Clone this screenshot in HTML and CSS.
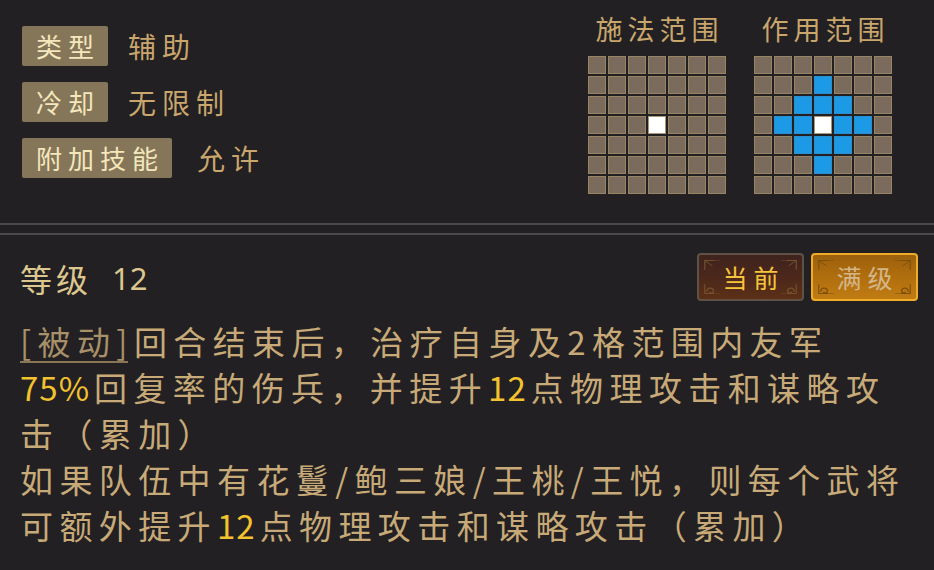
FILE: index.html
```html
<!DOCTYPE html>
<html lang="zh-CN">
<head>
<meta charset="utf-8">
<title>技能详情</title>
<link rel="stylesheet" href="styles.css">
</head>
<body>
<div class="panel">
  <section class="top">
    <div class="props">
      <div class="prop"><span class="tag">类型</span><span class="val">辅助</span></div>
      <div class="prop"><span class="tag">冷却</span><span class="val">无限制</span></div>
      <div class="prop"><span class="tag">附加技能</span><span class="val val-wide">允许</span></div>
    </div>
    <div class="ranges">
      <div class="range">
        <div class="range-title">施法范围</div>
        <div class="grid">
          <i class="c"></i><i class="c"></i><i class="c"></i><i class="c"></i><i class="c"></i><i class="c"></i><i class="c"></i>
          <i class="c"></i><i class="c"></i><i class="c"></i><i class="c"></i><i class="c"></i><i class="c"></i><i class="c"></i>
          <i class="c"></i><i class="c"></i><i class="c"></i><i class="c"></i><i class="c"></i><i class="c"></i><i class="c"></i>
          <i class="c"></i><i class="c"></i><i class="c"></i><i class="c w"></i><i class="c"></i><i class="c"></i><i class="c"></i>
          <i class="c"></i><i class="c"></i><i class="c"></i><i class="c"></i><i class="c"></i><i class="c"></i><i class="c"></i>
          <i class="c"></i><i class="c"></i><i class="c"></i><i class="c"></i><i class="c"></i><i class="c"></i><i class="c"></i>
          <i class="c"></i><i class="c"></i><i class="c"></i><i class="c"></i><i class="c"></i><i class="c"></i><i class="c"></i>
        </div>
      </div>
      <div class="range">
        <div class="range-title">作用范围</div>
        <div class="grid">
          <i class="c"></i><i class="c"></i><i class="c"></i><i class="c"></i><i class="c"></i><i class="c"></i><i class="c"></i>
          <i class="c"></i><i class="c"></i><i class="c"></i><i class="c b"></i><i class="c"></i><i class="c"></i><i class="c"></i>
          <i class="c"></i><i class="c"></i><i class="c b"></i><i class="c b"></i><i class="c b"></i><i class="c"></i><i class="c"></i>
          <i class="c"></i><i class="c b"></i><i class="c b"></i><i class="c w"></i><i class="c b"></i><i class="c b"></i><i class="c"></i>
          <i class="c"></i><i class="c"></i><i class="c b"></i><i class="c b"></i><i class="c b"></i><i class="c"></i><i class="c"></i>
          <i class="c"></i><i class="c"></i><i class="c"></i><i class="c b"></i><i class="c"></i><i class="c"></i><i class="c"></i>
          <i class="c"></i><i class="c"></i><i class="c"></i><i class="c"></i><i class="c"></i><i class="c"></i><i class="c"></i>
        </div>
      </div>
    </div>
  </section>

  <div class="divider"></div>

  <section class="detail">
    <div class="level-row">
      <div class="level"><span class="level-label">等级</span><span class="level-num">12</span></div>
      <div class="buttons">
        <button class="btn btn-cur">
          <svg class="orn" viewBox="0 0 107 48" preserveAspectRatio="none">
            <path d="M6 16 V6 H16 M91 6 H101 V16 M6 32 V42 H16 M91 42 H101 V32" fill="none" stroke="currentColor" stroke-width="1.2"/>
            <path d="M6 6 L14 12 M101 6 L93 12" stroke="currentColor" stroke-width="1"/>
            <path d="M8 40 c0 -5 7 -5 7 -1 c0 3 -4 3 -4 1" fill="none" stroke="currentColor" stroke-width="1.4"/>
            <path d="M99 40 c0 -5 -7 -5 -7 -1 c0 3 4 3 4 1" fill="none" stroke="currentColor" stroke-width="1.4"/>
            <path d="M16 6 H22 M85 6 H91 M16 42 H22 M85 42 H91" stroke="currentColor" stroke-width="0.8" opacity=".6"/>
          </svg>
          <span class="btn-text">当前</span>
        </button>
        <button class="btn btn-max">
          <svg class="orn" viewBox="0 0 107 48" preserveAspectRatio="none">
            <path d="M6 16 V6 H16 M91 6 H101 V16 M6 32 V42 H16 M91 42 H101 V32" fill="none" stroke="currentColor" stroke-width="1.2"/>
            <path d="M6 6 L14 12 M101 6 L93 12" stroke="currentColor" stroke-width="1"/>
            <path d="M8 40 c0 -5 7 -5 7 -1 c0 3 -4 3 -4 1" fill="none" stroke="currentColor" stroke-width="1.4"/>
            <path d="M99 40 c0 -5 -7 -5 -7 -1 c0 3 4 3 4 1" fill="none" stroke="currentColor" stroke-width="1.4"/>
            <path d="M16 6 H22 M85 6 H91 M16 42 H22 M85 42 H91" stroke="currentColor" stroke-width="0.8" opacity=".6"/>
          </svg>
          <span class="btn-text">满级</span>
        </button>
      </div>
    </div>

    <div class="desc">
      <p class="line"><span class="kw">[被动<span class="kw-end">]</span></span>回合结束后，治疗自身及2格范围内友军</p>
      <p class="line"><span class="hl">75<span class="hl-end">%</span></span>回复率的伤兵，并提升<span class="hl">1<span class="hl-end">2</span></span>点物理攻击和谋略攻</p>
      <p class="line">击（累加）</p>
      <p class="line">如果队伍中有花鬘/鲍三娘/王桃/王悦，则每个武将</p>
      <p class="line">可额外提升<span class="hl">1<span class="hl-end">2</span></span>点物理攻击和谋略攻击（累加）</p>
    </div>
  </section>
</div>
</body>
</html>
```

FILE: styles.css
```css
* { box-sizing: border-box; }

html, body {
  margin: 0;
  padding: 0;
  background: #222022;
}

body {
  width: 934px;
  height: 570px;
  overflow: hidden;
  font-family: "Noto Sans CJK SC", "Noto Sans", sans-serif;
}

.panel {
  display: flex;
  flex-direction: column;
}

/* ---------- top section ---------- */
.top {
  display: flex;
  justify-content: space-between;
  height: 223px;
  padding-left: 22px;
  padding-right: 42px;
}

.props {
  display: flex;
  flex-direction: column;
  gap: 16px;
  padding-top: 26px;
}

.prop {
  display: flex;
  align-items: center;
}

.tag {
  display: inline-flex;
  align-items: center;
  height: 40px;
  padding: 0 8px 0 14px;
  background: #857659;
  border-radius: 2px;
  color: #f4e7bc;
  font-size: 26px;
  letter-spacing: 6px;
  line-height: 1;
}

.val {
  margin-left: 20px;
  color: #c9a66c;
  font-size: 28px;
  letter-spacing: 6px;
  line-height: 1;
}

.val-wide { margin-left: 25px; }

.ranges {
  display: flex;
  gap: 28px;
  padding-top: 13px;
}

.range {
  display: flex;
  flex-direction: column;
  align-items: center;
}

.range-title {
  color: #c9a66c;
  font-size: 27px;
  line-height: 32px;
  letter-spacing: 5px;
  margin-right: -5px;
  height: 43px;
}

.grid {
  display: grid;
  grid-template-columns: repeat(7, 18px);
  grid-auto-rows: 18px;
  gap: 2px;
}

.c {
  display: block;
  background: #7b6b5c;
  box-shadow: inset 0 0 0 1px #978462;
}

.c.b {
  background: #1d9ae5;
  box-shadow: inset 0 0 0 1px #2a8fcc;
}

.c.w {
  background: #ffffff;
  box-shadow: inset 0 0 0 1px #a8967a;
}

/* ---------- divider ---------- */
.divider {
  height: 12px;
  border-top: 2px solid #4a494b;
  border-bottom: 2px solid #4a494b;
}

/* ---------- detail ---------- */
.detail {
  display: flex;
  flex-direction: column;
  padding: 18px 16px 0 20px;
}

.level-row {
  display: flex;
  justify-content: space-between;
  align-items: center;
}

.level {
  display: flex;
  align-items: center;
  color: #dcc78f;
  line-height: 1;
  padding-top: 2px;
}

.level-label {
  font-size: 32px;
  letter-spacing: 4px;
}

.level-num {
  margin-left: 20px;
  font-size: 31px;
  font-family: "Noto Sans", "Open Sans", sans-serif;
}

.buttons {
  display: flex;
  gap: 7px;
}

.btn {
  position: relative;
  width: 107px;
  height: 48px;
  padding: 0;
  border-radius: 4px;
  font-family: inherit;
  display: flex;
  align-items: center;
  justify-content: center;
}

.btn-cur {
  background: linear-gradient(180deg, #3e231e 0%, #4d281b 55%, #5c3017 100%);
  border: 2px solid #5f5245;
  color: #74502e;
}

.btn-max {
  background: linear-gradient(180deg, #9c600c 0%, #b06e0e 50%, #c07c12 100%);
  border: 2px solid #eeac2a;
  color: #7e4f0c;
}

.orn {
  position: absolute;
  left: 0;
  top: 0;
  width: 100%;
  height: 100%;
}

.btn-text {
  position: relative;
  font-size: 25px;
  letter-spacing: 6px;
  margin-right: -6px;
  line-height: 1;
}

.btn-cur .btn-text { color: #f6c43a; }
.btn-max .btn-text { color: #d3b689; }

.desc {
  margin-top: 17px;
}

.line {
  margin: 0;
  height: 46px;
  line-height: 46px;
  font-size: 33px;
  letter-spacing: 6.4px;
  color: #c7aa78;
  white-space: nowrap;
}

.kw {
  display: inline-block;
  line-height: 40px;
  color: #a89068;
  border-bottom: 2px solid #8a7556;
  margin-right: 6.4px;
}

.kw-end {
  letter-spacing: 0;
}

.hl {
  color: #f2c22f;
  letter-spacing: 1px;
}

.hl-end {
  letter-spacing: 5px;
}
```
